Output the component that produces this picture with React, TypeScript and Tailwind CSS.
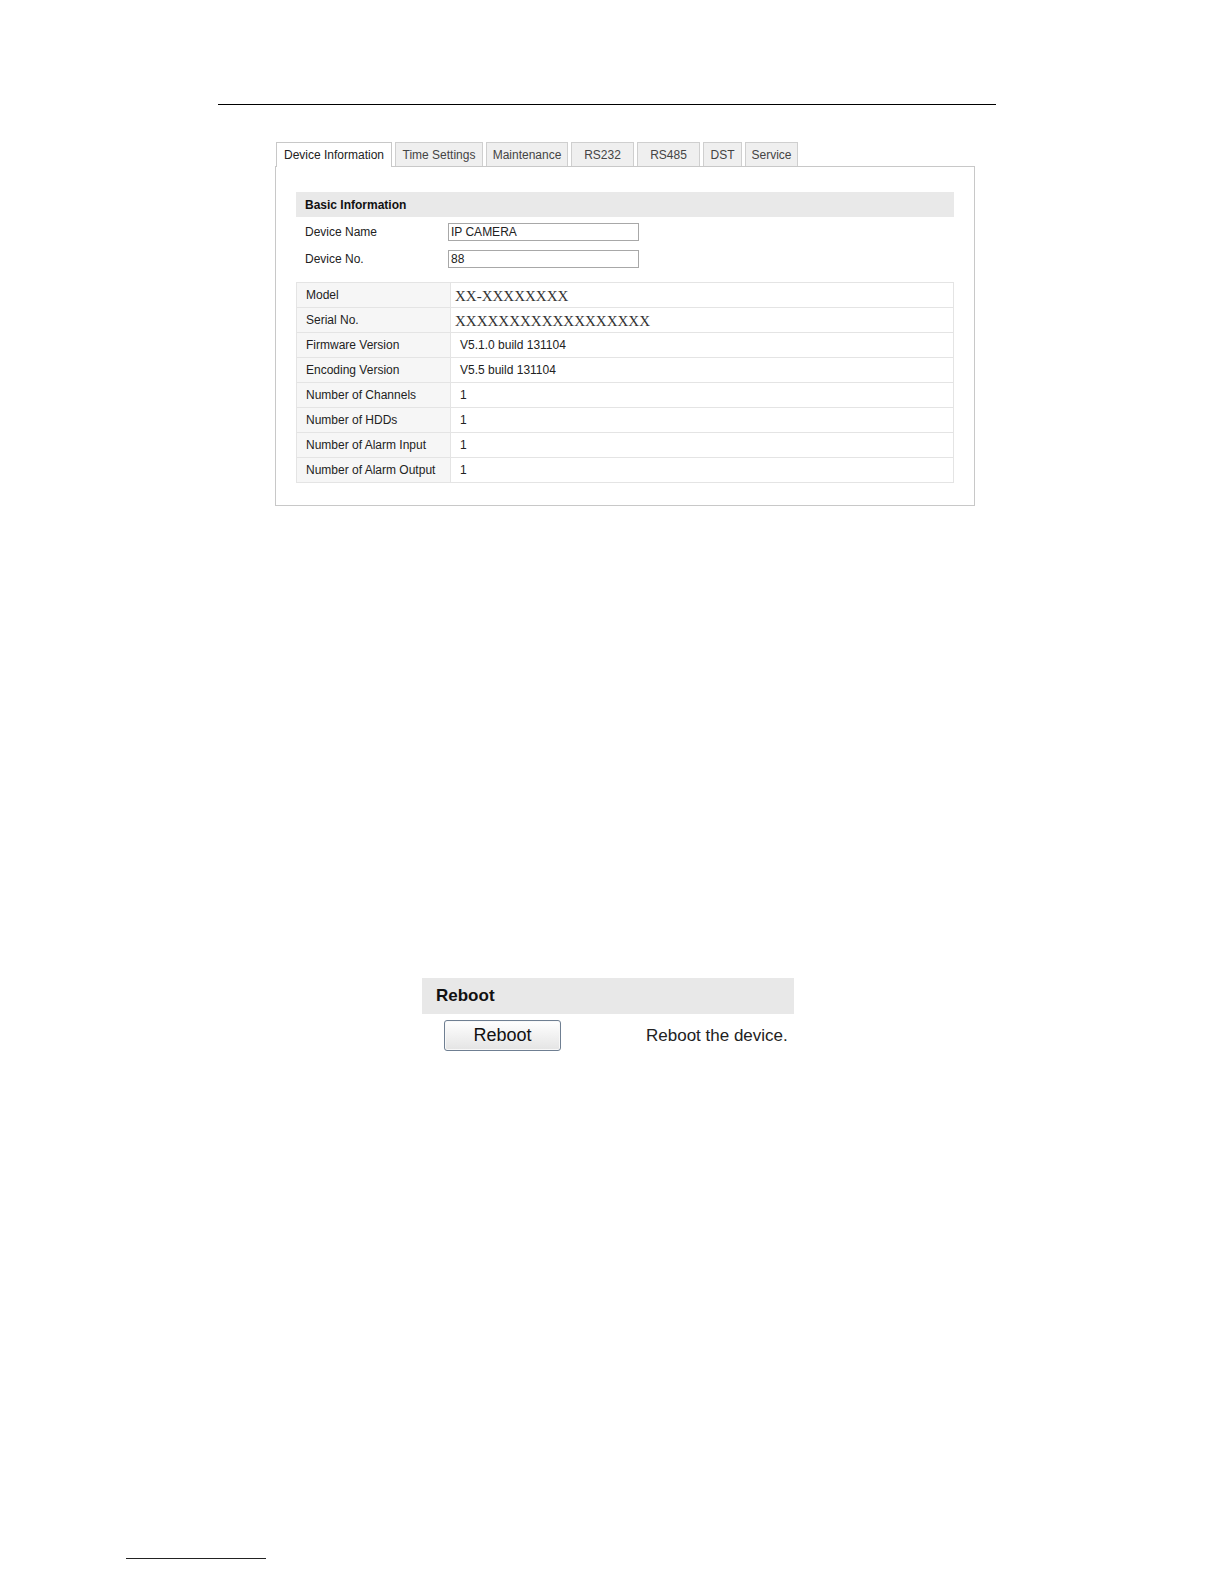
const tabs = [
  { label: "Device Information", w: "w-[116px]", active: true },
  { label: "Time Settings", w: "w-[88px]" },
  { label: "Maintenance", w: "w-[82px]" },
  { label: "RS232", w: "w-[63px]" },
  { label: "RS485", w: "w-[63px]" },
  { label: "DST", w: "w-[39px]" },
  { label: "Service", w: "w-[53px]" },
];

const rows: { label: string; value: string; serif?: boolean }[] = [
  { label: "Model", value: "XX-XXXXXXXX", serif: true },
  { label: "Serial No.", value: "XXXXXXXXXXXXXXXXXX", serif: true },
  { label: "Firmware Version", value: "V5.1.0 build 131104" },
  { label: "Encoding Version", value: "V5.5 build 131104" },
  { label: "Number of Channels", value: "1" },
  { label: "Number of HDDs", value: "1" },
  { label: "Number of Alarm Input", value: "1" },
  { label: "Number of Alarm Output", value: "1" },
];

export default function App() {
  return (
    <div className="flex h-[1584px] w-[1224px] flex-col bg-white font-['Liberation_Sans',Arial,sans-serif] text-[#222]">
      {/* page header rule */}
      <div className="ml-[218px] mt-[104px] h-px w-[778px] bg-black" />

      {/* device settings panel */}
      <div className="ml-[275px] mt-[37px] w-[700px]">
        <div className="flex gap-[3px] pl-px">
          {tabs.map((t) =>
            t.active ? (
              <div
                key={t.label}
                className={`${t.w} relative z-[1] -mb-px flex h-[25px] items-center justify-center border border-b-0 border-[#c8c8c8] bg-white text-[12px] text-[#222]`}
              >
                {t.label}
              </div>
            ) : (
              <div
                key={t.label}
                className={`${t.w} flex h-[24px] items-center justify-center border border-b-0 border-[#cfcfcf] bg-[#efefef] text-[12px] text-[#444]`}
              >
                {t.label}
              </div>
            )
          )}
        </div>

        <div className="h-[340px] border border-[#c8c8c8] bg-white px-[20px] pt-[25px]">
          <div className="flex h-[25px] items-center bg-[#e9e9e9] pl-[9px] text-[12px] font-bold text-[#111]">
            Basic Information
          </div>

          <div className="mt-[6px] flex h-[18px] items-center">
            <span className="w-[152px] pl-[9px] text-[12px]">Device Name</span>
            <div className="flex h-[18px] w-[191px] items-center border border-[#a8a8a8] bg-white pl-[2px] text-[12px]">
              IP CAMERA
            </div>
          </div>
          <div className="mt-[9px] flex h-[18px] items-center">
            <span className="w-[152px] pl-[9px] text-[12px]">Device No.</span>
            <div className="flex h-[18px] w-[191px] items-center border border-[#a8a8a8] bg-white pl-[2px] text-[12px]">
              88
            </div>
          </div>

          <div className="mt-[14px] border border-b-0 border-[#e4e4e4]">
            {rows.map((r) => (
              <div key={r.label} className="flex h-[25px] border-b border-[#e4e4e4]">
                <div className="flex w-[154px] items-center border-r border-[#e4e4e4] bg-[#f6f6f6] pl-[9px] text-[12px]">
                  {r.label}
                </div>
                {r.serif ? (
                  <div className="flex items-center pl-[4px] pt-[2px] font-['Liberation_Serif','Times_New_Roman',serif] text-[15px] text-[#333]">
                    {r.value}
                  </div>
                ) : (
                  <div className="flex items-center pl-[9px] text-[12px]">{r.value}</div>
                )}
              </div>
            ))}
          </div>
        </div>
      </div>

      {/* reboot section */}
      <div className="ml-[422px] mt-[472px] w-[372px]">
        <div className="flex h-[36px] items-center bg-[#e8e8e8] pl-[14px] text-[17px] font-bold text-[#111]">
          Reboot
        </div>
        <div className="mt-[6px] flex items-center">
          <button className="ml-[22px] flex h-[31px] w-[117px] items-center justify-center rounded-[3px] border border-[#6f7f92] bg-gradient-to-b from-white to-[#e4e4e4] text-[18px] text-[#111] shadow-[inset_0_0_0_1px_#f8f8f8]">
            Reboot
          </button>
          <span className="ml-[85px] text-[17px] text-[#222]">Reboot the device.</span>
        </div>
      </div>

      {/* footnote rule */}
      <div className="ml-[126px] mt-auto mb-[25px] h-px w-[140px] bg-[#222]" />
    </div>
  );
}
